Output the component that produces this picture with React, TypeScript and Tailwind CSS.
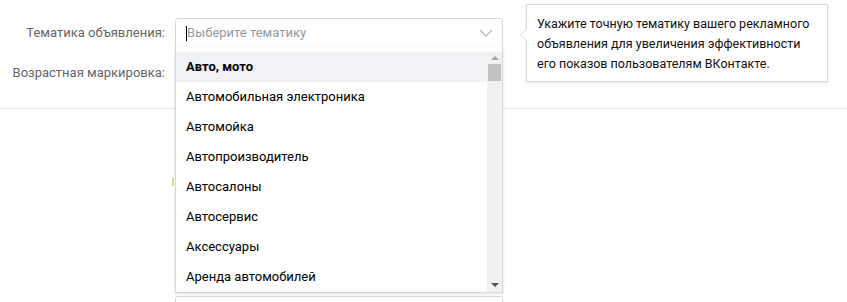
const TOPICS = [
  'Авто, мото',
  'Автомобильная электроника',
  'Автомойка',
  'Автопроизводитель',
  'Автосалоны',
  'Автосервис',
  'Аксессуары',
  'Аренда автомобилей',
]

function FakeScrollbar() {
  return (
    <div className="w-[15px] h-full bg-[#f1f1f1] flex flex-col items-center flex-shrink-0">
      <div className="h-[11px] flex items-center justify-center">
        <div className="w-0 h-0 border-l-[4px] border-r-[4px] border-b-[4px] border-l-transparent border-r-transparent border-b-[#a3a3a3]" />
      </div>
      <div className="w-[13px] h-[17px] bg-[#c1c1c1] mt-[1px]" />
      <div className="flex-1" />
      <div className="h-[14px] flex items-center justify-center">
        <div className="w-0 h-0 border-l-[4px] border-r-[4px] border-t-[4px] border-l-transparent border-r-transparent border-t-[#505050]" />
      </div>
    </div>
  )
}

export default function App() {
  return (
    <div className="relative w-[847px] h-[302px] bg-white overflow-hidden text-[13px] font-['Roboto','Liberation_Sans',sans-serif]">
      {/* form rows */}
      <div className="pt-[18px]">
        <div className="flex items-center h-[30px]">
          <div className="w-[165px] text-right text-[#656565]">Тематика объявления:</div>
          <div className="ml-[10px] w-[328px] h-[30px] border border-[#d3d9de] rounded-t-[3px] flex items-center pl-[10px] pr-[9px]">
            <span className="w-px h-[15px] bg-black" />
            <span className="text-[#939aa3]">Выберите тематику</span>
            <svg width="14" height="8" viewBox="0 0 14 8" className="ml-auto" fill="none">
              <polyline points="1,1 7,7 13,1" stroke="#b8bfc7" strokeWidth="1.4" />
            </svg>
          </div>
        </div>
        <div className="flex items-center h-[30px] mt-[10px]">
          <div className="w-[165px] text-right text-[#656565]">Возрастная маркировка:</div>
        </div>
      </div>
      <div className="mt-[20px] h-px bg-[#e7e8ec]" />

      {/* lower section */}
      <div className="relative mt-[187px] ml-[175px] w-[328px] h-[40px] border border-[#d3d9de] rounded-[3px]" />
      <div className="absolute left-[172px] top-[178px] w-[2px] h-[8px] bg-[#f6d27a]" />

      {/* dropdown */}
      <div className="absolute left-[175px] top-[47px] w-[328px] bg-white border border-t-0 border-[#d3d9de] shadow-[0_1px_3px_rgba(0,0,0,0.12)] pt-[5px]">
        <div className="flex h-[240px]">
          <div className="flex-1 overflow-hidden">
            {TOPICS.map((t, i) => (
              <div
                key={t}
                className={
                  'h-[30px] flex items-center pl-[10px] text-[#000] ' +
                  (i === 0 ? 'bg-[#f0f2f5] font-bold' : '')
                }
              >
                {t}
              </div>
            ))}
          </div>
          <FakeScrollbar />
        </div>
      </div>

      {/* tooltip */}
      <div className="absolute left-[526px] top-[4px] w-[302px] bg-white border border-[#d7dbe0] shadow-[0_1px_2px_rgba(0,0,0,0.12)] px-[10px] pt-[9px] pb-[7px] text-[12.5px] leading-[20px] text-[#111]">
        <div className="absolute -left-[7px] top-[23px] w-0 h-0 border-t-[7px] border-b-[7px] border-r-[7px] border-t-transparent border-b-transparent border-r-[#d7dbe0]" />
        <div className="absolute -left-[6px] top-[24px] w-0 h-0 border-t-[6px] border-b-[6px] border-r-[6px] border-t-transparent border-b-transparent border-r-white" />
        Укажите точную тематику вашего рекламного объявления для увеличения эффективности его показов пользователям ВКонтакте.
      </div>
    </div>
  )
}
